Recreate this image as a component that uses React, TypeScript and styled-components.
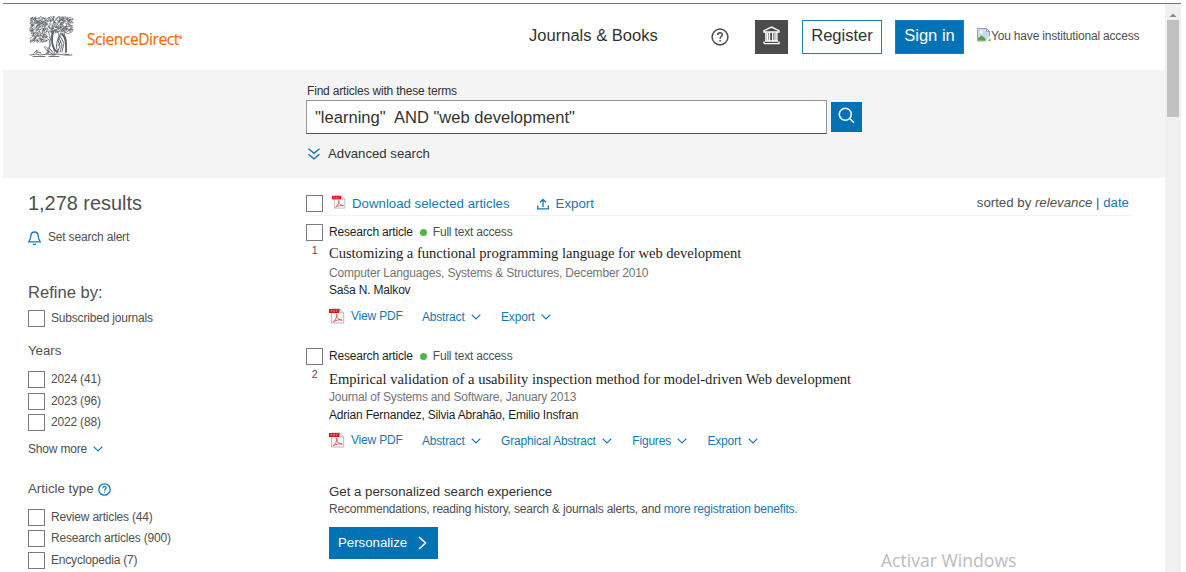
import React from "react";
import styled, { createGlobalStyle } from "styled-components";

const blue = "#1478b5";
const solidBlue = "#0272b6";

const GlobalStyle = createGlobalStyle`
  * { box-sizing: border-box; }
  body {
    margin: 0;
    background: #fff;
    color: #505050;
    font-family: "Liberation Sans", Arial, sans-serif;
    font-size: 12px;
    letter-spacing: -0.185px;
    overflow: hidden;
  }
  button, input { font-family: inherit; margin: 0; border-radius: 0; letter-spacing: 0; }
  svg { display: block; flex: none; }
`;

const Window = styled.div`
  position: relative;
  width: 1186px;
  height: 572px;
  padding: 3px 5px 0 3px;
  display: flex;
  overflow: hidden;
`;
const Page = styled.div`
  width: 1162px;
  border-top: 1px solid #77777b;
`;
const Scrollbar = styled.div`
  width: 16px;
  padding: 5px 2px 0;
  background: #f0f0f0;
  border-top: 1px solid #77777b;
`;
const ScrollArrow = styled.svg`
  width: 12px;
  height: 11px;
`;
const Thumb = styled.div`
  height: 97px;
  background: #c1c1c1;
`;

const Header = styled.header`
  display: flex;
  height: 66px;
  padding: 0 0 0 26px;
`;
const Brand = styled.a`
  display: flex;
  width: 500px;
  padding-top: 12px;
`;
const BrandName = styled.span`
  margin: 12px 0 0 13px;
  font: 15.5px/22px "Open Sans", sans-serif;
  letter-spacing: -0.42px;
  color: #f36d0e;
  -webkit-text-stroke: 0.2px #f36d0e;
  sup { font-size: 4px; line-height: 0; vertical-align: 6px; letter-spacing: 0; }
`;
const NavLink = styled.a`
  width: 181.5px;
  padding-top: 21px;
  font-size: 16.56px;
  line-height: 22px;
  letter-spacing: 0;
  color: #323232;
`;
const HelpLink = styled.a`
  width: 44.5px;
  padding-top: 24px;
`;
const HeaderButton = styled.button<{ $kind: "dark" | "outline" | "solid"; $width: number }>`
  width: ${(p) => p.$width}px;
  height: 34px;
  margin: 16px ${(p) => (p.$kind === "dark" ? 14 : 13)}px 0 0;
  padding: 0 0 ${(p) => (p.$kind === "dark" ? 4 : 2)}px;
  display: flex;
  justify-content: center;
  align-items: center;
  font-size: 16.56px;
  line-height: 20px;
  border: 1px solid ${(p) => (p.$kind === "dark" ? "#4b4b4b" : "#1b80bd")};
  background: ${(p) => ({ dark: "#4b4b4b", outline: "#fff", solid: solidBlue })[p.$kind]};
  color: ${(p) => (p.$kind === "outline" ? "#323232" : "#fff")};
`;
const Access = styled.div`
  display: flex;
  height: 16px;
  margin-top: 24px;
  line-height: 16px;
  white-space: nowrap;
`;

const SearchBand = styled.section`
  height: 108px;
  padding: 13px 0 0 303px;
  background: #f4f4f4;
  color: #323232;
`;
const SearchLabel = styled.label`
  display: block;
  padding-left: 1px;
  height: 17px;
  line-height: 16px;
`;
const SearchRow = styled.div`
  display: flex;
  align-items: center;
  gap: 4px;
`;
const SearchInput = styled.input`
  width: 521px;
  height: 34px;
  padding: 1px 7px 0 8px;
  border: 1px solid #949494;
  border-bottom-color: #505050;
  background: #fff;
  color: #323232;
  font-size: 16.56px;
  white-space: pre;
`;
const SearchButton = styled.button`
  width: 31px;
  height: 30px;
  margin-bottom: 1px;
  padding: 0 0 2px;
  display: flex;
  align-items: center;
  justify-content: center;
  border: 0;
  background: ${solidBlue};
`;
const Advanced = styled.a`
  display: flex;
  align-items: center;
  gap: 8px;
  margin: 12px 0 0 2px;
  font-size: 13.2px;
  line-height: 16px;
  letter-spacing: 0;
`;

const Columns = styled.div`
  display: flex;
  height: 394px;
`;
const Sidebar = styled.aside`
  width: 303px;
  padding: 12px 0 0 25px;
`;
const ResultCount = styled.h1`
  margin: 0;
  font-size: 19.9px;
  line-height: 26px;
  font-weight: 400;
  letter-spacing: 0;
`;
const Alert = styled.a`
  display: flex;
  gap: 7px;
  margin-top: 11px;
  line-height: 20px;
  height: 19px;
`;
const RefineTitle = styled.h2`
  margin: 36px 0 8px;
  font-size: 16.56px;
  line-height: 21px;
  height: 20px;
  font-weight: 400;
  letter-spacing: 0;
`;
const FilterTitle = styled.h3<{ $top: number; $bottom: number }>`
  display: flex;
  align-items: center;
  gap: 4px;
  margin: ${(p) => p.$top}px 0 ${(p) => p.$bottom}px;
  font-size: 13.25px;
  line-height: 16px;
  height: 16px;
  font-weight: 400;
  letter-spacing: 0;
`;
const Check = styled.span`
  flex: none;
  width: 17px;
  height: 17px;
  border: 1px solid #7b7b7b;
  background: #fff;
`;
const Option = styled.label<{ $gap?: number }>`
  display: flex;
  gap: 6px;
  height: 17px;
  margin-bottom: ${(p) => p.$gap ?? 0}px;
  line-height: 16px;
`;
const ShowMore = styled.a`
  display: flex;
  align-items: center;
  gap: 6px;
  margin-top: 10px;
  line-height: 16px;
  height: 16px;
`;

const Main = styled.main`
  width: 826px;
  padding-top: 17px;
`;
const Toolbar = styled.div`
  display: flex;
  height: 21px;
  border-bottom: 1px solid #f3f3f3;
  font-size: 13.25px;
  line-height: 17px;
  letter-spacing: 0;
`;
const ToolLink = styled.a<{ $left: number; $gap: number }>`
  display: flex;
  gap: ${(p) => p.$gap}px;
  margin-left: ${(p) => p.$left}px;
  color: ${blue};
`;
const Sorting = styled.span`
  margin: -1px 3px 0 auto;
  a { color: ${blue}; }
`;
const Article = styled.article<{ $top: number }>`
  display: flex;
  margin-top: ${(p) => p.$top}px;
`;
const Marker = styled.div`
  width: 23px;
`;
const Rank = styled.div`
  width: 17px;
  margin-top: 3px;
  font-size: 10.5px;
  line-height: 12px;
  text-align: center;
`;
const Kind = styled.div`
  display: flex;
  align-items: center;
  height: 16px;
  line-height: 16px;
  color: #1f1f1f;
`;
const Dot = styled.span`
  width: 7px;
  height: 7px;
  margin: 1px 6px 0 7px;
  border-radius: 50%;
  background: #4fb748;
`;
const AccessText = styled.span`
  color: #505050;
`;
const Title = styled.h2<{ $top: number; $spacing: number }>`
  margin: ${(p) => p.$top}px 0 0;
  height: 18px;
  font: 400 14.6px/18px "Liberation Serif", serif;
  letter-spacing: ${(p) => p.$spacing}px;
  color: #1f1f1f;
  white-space: nowrap;
`;
const Line = styled.div<{ $top: number; $muted?: boolean }>`
  height: 16px;
  margin-top: ${(p) => p.$top}px;
  line-height: 16px;
  color: ${(p) => (p.$muted ? "#737373" : "#1f1f1f")};
`;
const Actions = styled.div<{ $top: number }>`
  display: flex;
  height: 17px;
  margin-top: ${(p) => p.$top}px;
  line-height: 16px;
  color: ${blue};
`;
const PdfLink = styled.a`
  display: flex;
  gap: 6px;
  width: 93px;
`;
const Action = styled.a`
  display: flex;
  align-items: center;
  gap: 6.5px;
  margin-right: 20px;
  height: 17px;
  svg { margin-top: 1px; }
`;
const Promo = styled.section`
  margin: 34px 0 0 23px;
  line-height: 16px;
  a { color: ${blue}; }
`;
const PromoTitle = styled.div`
  font-size: 13.25px;
  line-height: 17px;
  height: 18px;
  letter-spacing: 0;
  color: #323232;
`;
const PersonalizeButton = styled.button`
  width: 109px;
  height: 32px;
  margin-top: 10px;
  padding: 0 11px 1px 9px;
  display: flex;
  align-items: center;
  justify-content: space-between;
  border: 0;
  background: ${solidBlue};
  color: #fff;
  font-size: 13.25px;
`;
const Watermark = styled.div`
  position: absolute;
  left: 881px;
  top: 548px;
  font: 17.6px/24px "Open Sans", sans-serif;
  letter-spacing: 0;
  color: #bcbcbc;
  white-space: nowrap;
`;

const noise = (n: number) => {
  const v = Math.sin(n * 127.1 + 311.7) * 43758.5453;
  return v - Math.floor(v);
};

/* Engraved elm: foliage is built from short curls, the trunk and figures from strokes. */
const TreeLogo = () => {
  const curls: string[] = [];
  for (let i = 0; i < 820; i++) {
    const x = 1.5 + noise(i) * 42;
    const y = 1 + noise(i + 1500) * 25;
    if (y > 16 && x > 18) continue;
    const a = noise(i + 2900) * 6.28;
    const dx = Math.cos(a) * 1.2;
    const dy = Math.sin(a) * 1.2;
    curls.push(`M${x.toFixed(1)} ${y.toFixed(1)}q${dy.toFixed(1)} ${dx.toFixed(1)} ${dx.toFixed(1)} ${dy.toFixed(1)}`);
  }
  return (
    <svg width="45" height="42" viewBox="0 0 45 42" fill="none" stroke="#5a5d63" strokeLinecap="round">
      <path d={curls.join("")} strokeWidth=".6" />
      <path d="M19 15q3 5 2 11t-2 12M23 15q-1 6 0 11t3 12" strokeWidth=".7" />
      <path d="M20 21l2 2-2 3 2 3-2 3 3 3M12 20q5 0 8 4M11 26q4 0 8-2M15 31q3-1 4 2l-1 4M16 32l2 3M36 16l3 2 3-2M18 34l6 5M20 32l6 7" strokeWidth=".7" />
      <path d="M24 16q-2 9 0 14 1 4 4 6M33 18q4 4 4 11v7" strokeWidth="1.8" />
      <path d="M26 17q4-3 4 3l-2 6q-2 5 1 10M30 22l3 7-2 7M32 17l-3 7 2 6-3 7M32 25l-3 5M35 17q3 6 2 13M31 20l4 7-2 9" strokeWidth=".9" />
      <path d="M1 39l6-1 4 1 7-1 5 1 6-1 6 1 8 0M4 40.5h12M20 40.5h10M5 37l3-3v3M8 36l4 1M17 38l4-3M22 37l3 2M35 38l5 1" strokeWidth=".85" />
    </svg>
  );
};

const HelpIcon = ({ size, color }: { size: number; color: string }) => (
  <svg width={size} height={size} viewBox="0 0 18 18" fill="none" stroke={color} strokeWidth={size < 16 ? 1.8 : 1.5}>
    <circle cx="9" cy="9" r="7.9" />
    <path d="M6.7 7.1c0-3.2 4.6-3.1 4.6-.4 0 1.8-2.2 1.8-2.2 4M9.1 12v1.6" />
  </svg>
);
const BankIcon = () => (
  <svg width="17" height="19" viewBox="0 0 17 19" fill="none" stroke="#fff" strokeWidth="1.4">
    <path d="M1 6V4.6L8.5 1 16 4.6V6zM2.9 6v9M6.5 6.5v8M9.7 6.5v8M13.9 6v9M4.6 7v8M12 7v8M2 15h13M1 17.6h15V15.6M1 17.6v-2" />
  </svg>
);
const BrokenImage = () => (
  <svg width="14" height="14" viewBox="0 0 14 14">
    <path d="M.5.5h9l3 3V9L9 13H.5z" fill="#c9dbf3" stroke="#a3a3a3" />
    <path d="M9.5.5v3h3z" fill="#fff" stroke="#a3a3a3" />
    <circle cx="4.2" cy="4" r="1.5" fill="#fff" />
    <path d="M1 12.5V10l3.500-2.500 3 2 1.500 3z" fill="#56a93c" />
    <path d="M14 6.200L7.800 14H14z" fill="#fff" />
    <path d="M13.500 13H11l2.500-3z" fill="#56a93c" />
  </svg>
);
const Chevron = () => (
  <svg width="10" height="6" viewBox="0 0 10 6" fill="none" stroke={blue} strokeWidth="1.2">
    <path d="M.7.7L5 5 9.3.7" />
  </svg>
);
const PdfIcon = ({ size = 16 }: { size?: number }) => (
  <svg width={size} height={size} viewBox="0 0 16 16" fill="none">
    <path d="M2.6 1h8.2l3.9 3.8V15H2.6z" fill="#fbfbfb" stroke="#a9a9a9" strokeWidth=".8" />
    <path d="M10.8 1v3.8h3.9" stroke="#a9a9a9" strokeWidth=".8" />
    <path d="M0 1h10.3v4H0z" fill="#d9151b" />
    <path d="M2 4V2h1v1H2M4.6 2v2h1V2zM7.4 4V2h1.3M7.4 3h1" stroke="#f6b5b5" strokeWidth=".4" />
    <path d="M4.200 13.800c1.800-1.300 4-5 3.900-7.300-.4-.9-1.100 0-.5 1.400.9 2.400 2.800 4.400 5.600 4.300.6-.7-3.600-.9-7.600.900-1.300.6-1.700.9-1.400.7z" stroke="#e8484b" strokeWidth=".9" />
  </svg>
);

interface Result {
  title: string;
  source: string;
  authors: string;
  actions: string[];
  top: number;
  spacing: number;
  gaps: [number, number, number, number];
}
const results: Result[] = [
  {
    title: "Customizing a functional programming language for web development",
    source: "Computer Languages, Systems & Structures, December 2010",
    authors: "Saša N. Malkov",
    actions: ["Abstract", "Export"],
    top: 8,
    spacing: -0.035,
    gaps: [4, 3, 1, 10],
  },
  {
    title: "Empirical validation of a usability inspection method for model-driven Web development",
    source: "Journal of Systems and Software, January 2013",
    authors: "Adrian Fernandez, Silvia Abrahão, Emilio Insfran",
    actions: ["Abstract", "Graphical Abstract", "Figures", "Export"],
    top: 23,
    spacing: 0,
    gaps: [6, 1, 2, 9],
  },
];

export default function App() {
  return (
    <Window>
      <GlobalStyle />
      <Page>
        <Header>
          <Brand>
            <TreeLogo />
            <BrandName>ScienceDirect<sup>®</sup></BrandName>
          </Brand>
          <NavLink>Journals &amp; Books</NavLink>
          <HelpLink><HelpIcon size={18} color="#4b4b4b" /></HelpLink>
          <HeaderButton $kind="dark" $width={33}><BankIcon /></HeaderButton>
          <HeaderButton $kind="outline" $width={80}>Register</HeaderButton>
          <HeaderButton $kind="solid" $width={69}>Sign in</HeaderButton>
          <Access><BrokenImage />You have institutional access</Access>
        </Header>
        <SearchBand>
          <SearchLabel>Find articles with these terms</SearchLabel>
          <SearchRow>
            <SearchInput readOnly value={'"learning"  AND "web development"'} />
            <SearchButton>
              <svg width="17" height="17" viewBox="0 0 17 17" fill="none" stroke="#fff" strokeWidth="1.5">
                <circle cx="7.3" cy="7.2" r="6" />
                <path d="M11.6 11.5l4.4 4.3" />
              </svg>
            </SearchButton>
          </SearchRow>
          <Advanced>
            <svg width="12" height="12" viewBox="0 0 12 12" fill="none" stroke={blue} strokeWidth="1.4">
              <path d="M.5.8L6 5.4 11.5.8M.5 6.2L6 10.8l5.5-4.6" />
            </svg>
            Advanced search
          </Advanced>
        </SearchBand>
        <Columns>
          <Sidebar>
            <ResultCount>1,278 results</ResultCount>
            <Alert>
              <svg width="13" height="19" viewBox="0 0 13 19" fill="none" stroke={blue} strokeWidth="1.3">
                <path d="M.7 14.800C2.600 12.500 2.700 11 2.900 8.500 3.100 6 4.500 5 6.500 5s3.400 1 3.600 3.500c.2 2.500.3 4 2.200 6.300zM5 17q1.500 1.200 3 0" />
              </svg>
              Set search alert
            </Alert>
            <RefineTitle>Refine by:</RefineTitle>
            <Option><Check />Subscribed journals</Option>
            <FilterTitle $top={16} $bottom={12}>Years</FilterTitle>
            <Option $gap={5}><Check />2024 (41)</Option>
            <Option $gap={4}><Check />2023 (96)</Option>
            <Option><Check />2022 (88)</Option>
            <ShowMore>Show more <Chevron /></ShowMore>
            <FilterTitle $top={24} $bottom={12}>Article type <HelpIcon size={13} color={blue} /></FilterTitle>
            <Option $gap={4}><Check />Review articles (44)</Option>
            <Option $gap={5}><Check />Research articles (900)</Option>
            <Option><Check />Encyclopedia (7)</Option>
          </Sidebar>
          <Main>
            <Toolbar>
              <Check />
              <ToolLink $left={9} $gap={6}><PdfIcon size={14} />Download selected articles</ToolLink>
              <ToolLink $left={27} $gap={7}>
                <svg width="12" height="16" viewBox="0 0 12 16" fill="none" stroke={blue} strokeWidth="1.3">
                  <path d="M6 12V4.500M3 7.300L6 4.500l3 2.800M.7 10.500v3.300h10.600v-3.300" />
                </svg>
                Export
              </ToolLink>
              <Sorting>sorted by <i>relevance</i> | <a>date</a></Sorting>
            </Toolbar>
            {results.map((r, i) => (
              <Article key={r.title} $top={r.top}>
                <Marker><Check as="div" /><Rank>{i + 1}</Rank></Marker>
                <div>
                  <Kind>Research article<Dot /><AccessText>Full text access</AccessText></Kind>
                  <Title $top={r.gaps[0]} $spacing={r.spacing}>{r.title}</Title>
                  <Line $muted $top={r.gaps[1]}>{r.source}</Line>
                  <Line $top={r.gaps[2]}>{r.authors}</Line>
                  <Actions $top={r.gaps[3]}>
                    <PdfLink><PdfIcon /><span>View PDF</span></PdfLink>
                    {r.actions.map((label) => (
                      <Action key={label}><span>{label}</span><Chevron /></Action>
                    ))}
                  </Actions>
                </div>
              </Article>
            ))}
            <Promo>
              <PromoTitle>Get a personalized search experience</PromoTitle>
              <div>Recommendations, reading history, search &amp; journals alerts, and <a>more registration benefits.</a></div>
              <PersonalizeButton>
                Personalize
                <svg width="9" height="14" viewBox="0 0 9 14" fill="none" stroke="#fff" strokeWidth="1.7">
                  <path d="M1 1l6.500 6L1 13" />
                </svg>
              </PersonalizeButton>
            </Promo>
          </Main>
        </Columns>
      </Page>
      <Scrollbar>
        <ScrollArrow viewBox="0 0 12 11"><path d="M2.500 8L6 4.500 9.500 8z" fill="#8b8b8b" /></ScrollArrow>
        <Thumb />
      </Scrollbar>
      <Watermark>Activar Windows</Watermark>
    </Window>
  );
}
